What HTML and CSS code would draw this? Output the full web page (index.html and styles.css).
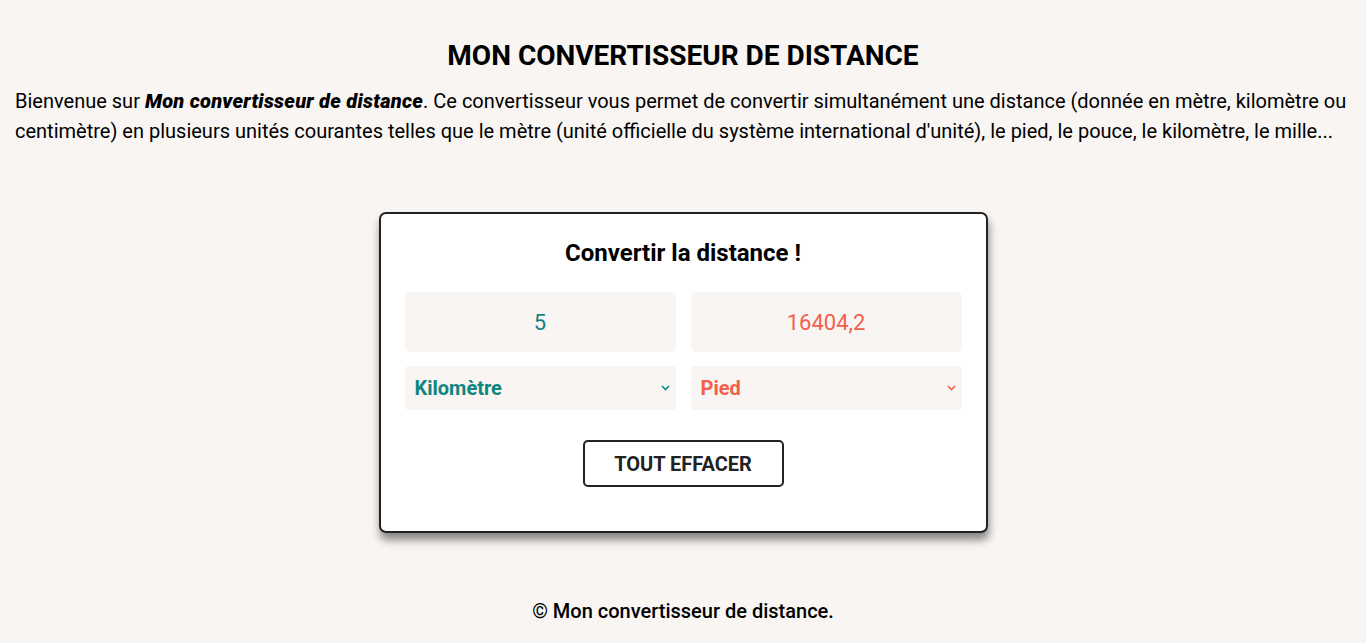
FILE: index.html
```html
<!DOCTYPE html>
<html lang="fr">
<head>
<meta charset="utf-8">
<title>Mon convertisseur de distance</title>
<link rel="stylesheet" href="styles.css">
</head>
<body>
<header class="intro">
  <h1 class="title">MON CONVERTISSEUR DE DISTANCE</h1>
  <p class="lead">Bienvenue sur <strong class="brand"><em>Mon convertisseur de distance</em></strong>. Ce convertisseur vous permet de convertir simultanément une distance (donnée en mètre, kilomètre ou centimètre) en plusieurs unités courantes telles que le mètre (unité officielle du système international d'unité), le pied, le pouce, le kilomètre, le mille...</p>
</header>
<main class="card">
  <h2 class="card-title">Convertir la distance !</h2>
  <div class="grid">
    <input class="field field-from" type="text" value="5">
    <input class="field field-to" type="text" value="16404,2">
    <div class="select-wrap from">
      <select class="unit"><option>Kilomètre</option></select>
      <svg class="chev" width="9" height="6" viewBox="0 0 9 6"><path d="M1 1 L4.5 4.5 L8 1" fill="none" stroke="currentColor" stroke-width="1.6"/></svg>
    </div>
    <div class="select-wrap to">
      <select class="unit"><option>Pied</option></select>
      <svg class="chev" width="9" height="6" viewBox="0 0 9 6"><path d="M1 1 L4.5 4.5 L8 1" fill="none" stroke="currentColor" stroke-width="1.6"/></svg>
    </div>
  </div>
  <div class="actions">
    <button class="btn" type="button">TOUT EFFACER</button>
  </div>
</main>
<footer class="foot">© Mon convertisseur de distance.</footer>
</body>
</html>
```

FILE: styles.css
```css
* { box-sizing: border-box; }
html, body { margin: 0; padding: 0; }
body {
  background: #f8f5f3;
  font-family: Roboto, "Liberation Sans", sans-serif;
  color: #000;
}
.intro { padding: 39px 15px 0; }
.title {
  margin: 0;
  text-align: center;
  font-size: 28px;
  line-height: 33px;
  font-weight: 700;
}
.lead {
  margin: 14px 0 0;
  font-size: 20px;
  line-height: 30px;
}
.brand { font-weight: 900; letter-spacing: 0.25px; }
.card {
  width: 609px;
  margin: 66px auto 0;
  background: #fff;
  border: 2px solid #222;
  border-radius: 7px;
  box-shadow: 1px 7px 8px rgba(0,0,0,0.45);
  padding: 25px 24px 44px;
}
.card-title {
  margin: 0;
  text-align: center;
  font-size: 24px;
  line-height: 28px;
  font-weight: 700;
}
.grid {
  margin-top: 25px;
  display: grid;
  grid-template-columns: 1fr 1fr;
  column-gap: 15px;
  row-gap: 14px;
}
.field {
  height: 60px;
  border: none;
  border-radius: 5px;
  background: #f8f5f3;
  text-align: center;
  font-family: Roboto, "Liberation Sans", sans-serif;
  font-size: 22px;
  outline: none;
  width: 100%;
}
.field-from { color: #0f8580; }
.field-to { color: #f25f4a; }
.select-wrap { position: relative; }
.select-wrap.from { color: #0f8580; }
.select-wrap.to { color: #f25f4a; }
.unit {
  appearance: none;
  -webkit-appearance: none;
  width: 100%;
  height: 44px;
  border: none;
  border-radius: 4px;
  background: #f8f5f3;
  color: inherit;
  font-family: Roboto, "Liberation Sans", sans-serif;
  font-size: 20px;
  font-weight: 700;
  padding: 0 10px;
  outline: none;
}
.chev {
  position: absolute;
  right: 6px;
  top: 19px;
  pointer-events: none;
}
.actions {
  margin-top: 30px;
  display: flex;
  justify-content: center;
}
.btn {
  width: 201px;
  height: 47px;
  background: #fff;
  border: 2px solid #222;
  border-radius: 5px;
  color: #222;
  font-family: Roboto, "Liberation Sans", sans-serif;
  font-size: 20px;
  font-weight: 700;
}
.foot {
  margin-top: 66px;
  text-align: center;
  font-size: 20px;
  line-height: 24px;
  font-weight: 500;
}
```
